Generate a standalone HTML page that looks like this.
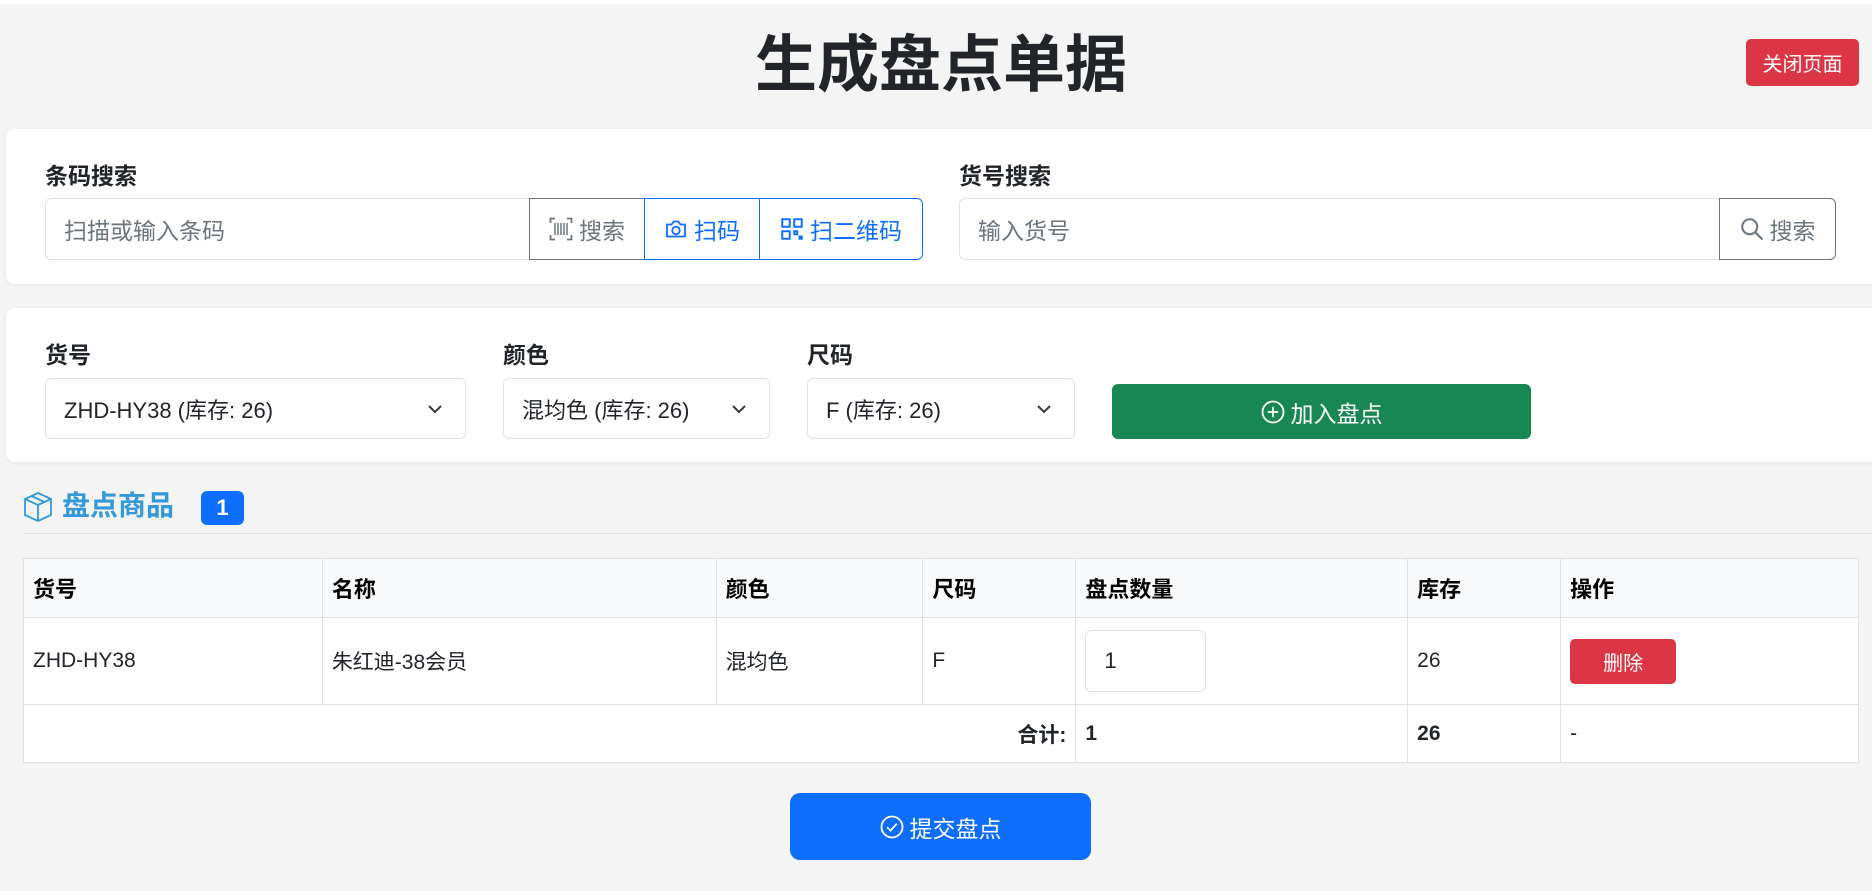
<!DOCTYPE html>
<html><head><meta charset="utf-8"><style>
*{box-sizing:border-box;margin:0;padding:0}
body{width:1872px;height:891px;background:#f4f4f4;font-family:"Liberation Sans","Noto Sans CJK SC",sans-serif;color:#212529;position:relative;overflow:hidden;font-size:21px}
.a{position:absolute}
.card{position:absolute;background:#fff;border-radius:9px;box-shadow:0 1px 4px rgba(0,0,0,.06)}
.lbl{position:absolute;font-weight:bold;font-size:23px;color:#212529}
.inp{position:absolute;border:1px solid #dee2e6;background:#fff;display:flex;align-items:center;padding-left:18px;font-size:23px}
.btn{position:absolute;display:flex;align-items:center;justify-content:center;gap:6px;font-size:23px}
.sel{position:absolute;border:1px solid #dee2e6;border-radius:6px;background:#fff;display:flex;align-items:center;padding-left:18px;font-size:22px}
.sel svg{position:absolute;right:22px;top:50%;margin-top:-5px}
table{position:absolute;left:23px;top:558px;width:1836px;border-collapse:collapse;background:#fff}
td,th{border:1px solid #dee2e6;text-align:left;padding:0 9px;font-size:21px;vertical-align:middle}
th{background:#f8f9fa;height:59px;font-weight:bold;color:#000;font-size:22px}
</style></head><body>
<div class="a" style="left:0;top:0;width:1872px;height:4px;background:#fff"></div>
<div class="a" style="left:0;top:30px;width:1872px;text-align:center;font-size:62px;font-weight:bold;line-height:72px;padding-left:10px">生成盘点单据</div>
<div class="btn" style="left:1746px;top:39px;width:113px;height:47px;background:#dc3545;color:#fff;border-radius:5px;font-size:20px">关闭页面</div>

<div class="card" style="left:6px;top:129px;width:1880px;height:155px"></div>
<div class="lbl" style="left:45px;top:157px">条码搜索</div>
<div class="inp" style="left:45px;top:198px;width:485px;height:62px;border-radius:6px 0 0 6px;color:#6c757d">扫描或输入条码</div>
<div class="btn" style="left:529px;top:198px;width:116px;height:62px;border:1px solid #6c757d;color:#6c757d">
<svg width="24" height="24" viewBox="0 0 16 16" fill="none" stroke="#6c757d" stroke-width="1.2"><path d="M1 4V1h3M12 1h3v3M15 12v3h-3M4 15H1v-3"/><path d="M4 4v8M6 4v8M8 4v8M10 4v8M12 4v8" stroke-width="1"/></svg>搜索</div>
<div class="btn" style="left:644px;top:198px;width:116px;height:62px;border:1px solid #0d6efd;color:#0d6efd">
<svg width="24" height="24" viewBox="0 0 16 16" fill="none" stroke="#0d6efd" stroke-width="1.2"><path d="M2 5h3l1.5-2h3L11 5h3v8H2z"/><circle cx="8" cy="9" r="2.5"/></svg>扫码</div>
<div class="btn" style="left:759px;top:198px;width:164px;height:62px;border:1px solid #0d6efd;border-radius:0 6px 6px 0;color:#0d6efd">
<svg width="24" height="24" viewBox="0 0 16 16" fill="none" stroke="#0d6efd" stroke-width="1.3"><rect x="1.5" y="1.5" width="5" height="5"/><rect x="9.5" y="1.5" width="5" height="5"/><rect x="1.5" y="9.5" width="5" height="5"/><path d="M9.5 9.5h2v2h-2zM13 13h1.5v1.5H13z"/></svg>扫二维码</div>

<div class="lbl" style="left:959px;top:157px">货号搜索</div>
<div class="inp" style="left:959px;top:198px;width:761px;height:62px;border-radius:6px 0 0 6px;color:#6c757d">输入货号</div>
<div class="btn" style="left:1719px;top:198px;width:117px;height:62px;border:1px solid #6c757d;border-radius:0 6px 6px 0;color:#6c757d">
<svg width="24" height="24" viewBox="0 0 16 16" fill="none" stroke="#6c757d" stroke-width="1.4"><circle cx="6.5" cy="6.5" r="5"/><path d="M10.3 10.3L15 15"/></svg>搜索</div>

<div class="card" style="left:6px;top:308px;width:1880px;height:154px"></div>
<div class="lbl" style="left:45px;top:336px">货号</div>
<div class="lbl" style="left:503px;top:336px">颜色</div>
<div class="lbl" style="left:807px;top:336px">尺码</div>
<div class="sel" style="left:45px;top:378px;width:421px;height:61px">ZHD-HY38 (库存: 26)<svg width="16" height="10" viewBox="0 0 16 10" fill="none" stroke="#343a40" stroke-width="2"><path d="M2 2l6 6 6-6"/></svg></div>
<div class="sel" style="left:503px;top:378px;width:267px;height:61px">混均色 (库存: 26)<svg width="16" height="10" viewBox="0 0 16 10" fill="none" stroke="#343a40" stroke-width="2"><path d="M2 2l6 6 6-6"/></svg></div>
<div class="sel" style="left:807px;top:378px;width:268px;height:61px">F (库存: 26)<svg width="16" height="10" viewBox="0 0 16 10" fill="none" stroke="#343a40" stroke-width="2"><path d="M2 2l6 6 6-6"/></svg></div>
<div class="btn" style="left:1112px;top:384px;width:419px;height:55px;background:#198754;color:#fff;border-radius:6px">
<svg width="24" height="24" viewBox="0 0 16 16" fill="none" stroke="#fff" stroke-width="1.2"><circle cx="8" cy="8" r="7"/><path d="M8 4.5v7M4.5 8h7"/></svg>加入盘点</div>

<svg class="a" style="left:22px;top:491px" width="32" height="32" viewBox="0 0 16 16" fill="none" stroke="#3498db" stroke-width="0.9"><path d="M8 1l6.5 3v8L8 15 1.5 12V4z"/><path d="M1.5 4L8 7l6.5-3M8 7v8M4.7 2.5l6.5 3"/></svg>
<div class="a" style="left:62px;top:488px;font-size:28px;font-weight:bold;color:#3498db;line-height:36px">盘点商品</div>
<div class="btn" style="left:201px;top:491px;width:43px;height:34px;background:#0d6efd;color:#fff;border-radius:6px;font-weight:bold;font-size:22px">1</div>
<div class="a" style="left:23px;top:533px;width:1849px;height:1px;background:#e2e2e2"></div>

<table>
<colgroup><col style="width:299px"><col style="width:394px"><col style="width:207px"><col style="width:153px"><col style="width:332px"><col style="width:153px"><col style="width:298px"></colgroup>
<tr><th>货号</th><th>名称</th><th>颜色</th><th>尺码</th><th>盘点数量</th><th>库存</th><th>操作</th></tr>
<tr style="height:87px"><td>ZHD-HY38</td><td>朱红迪-38会员</td><td>混均色</td><td>F</td>
<td><div style="width:121px;height:62px;border:1px solid #dee2e6;border-radius:6px;display:flex;align-items:center;padding-left:18px;font-size:22px">1</div></td>
<td>26</td><td><div style="width:106px;height:45px;background:#dc3545;color:#fff;border-radius:5px;display:flex;align-items:center;justify-content:center;font-size:20px">删除</div></td></tr>
<tr style="height:58px"><td colspan="4" style="text-align:right;font-weight:bold">合计:</td><td style="font-weight:bold">1</td><td style="font-weight:bold">26</td><td>-</td></tr>
</table>

<div class="btn" style="left:790px;top:793px;width:301px;height:67px;background:#0d6efd;color:#fff;border-radius:10px">
<svg width="24" height="24" viewBox="0 0 16 16" fill="none" stroke="#fff" stroke-width="1.2"><circle cx="8" cy="8" r="7"/><path d="M4.8 8.2l2.2 2.2 4.2-4.6"/></svg>提交盘点</div>
</body></html>
